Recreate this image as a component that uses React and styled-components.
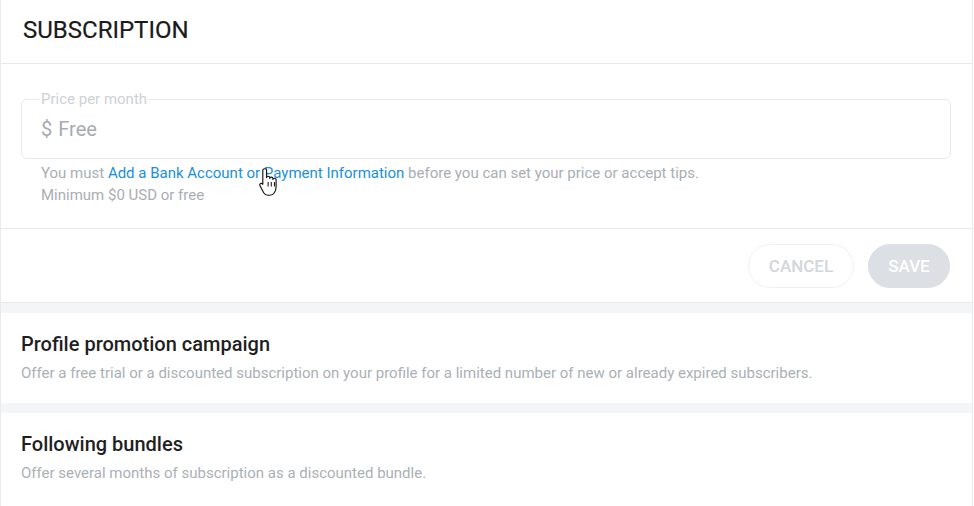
import React from 'react';
import styled, { createGlobalStyle } from 'styled-components';

const GlobalStyle = createGlobalStyle`
  html, body {
    margin: 0;
    padding: 0;
    background: #fff;
  }
  body {
    font-family: Roboto, "Liberation Sans", sans-serif;
    -webkit-font-smoothing: antialiased;
  }
`;

const Page = styled.div`
  width: 971px;
  min-height: 506px;
  border-left: 1px solid #e8eaed;
  border-right: 1px solid #e8eaed;
  background: #f4f5f7;
  display: flex;
  flex-direction: column;
  gap: 10px;
`;

const Panel = styled.section`
  background: #fff;
  border-bottom: 1px solid #e6e8eb;
`;

const Header = styled.div`
  height: 59px;
  padding: 0 22px 4px;
  display: flex;
  align-items: center;
  border-bottom: 1px solid #e6e8eb;
`;

const Title = styled.h1`
  margin: 0;
  font-size: 24px;
  font-weight: 400;
  color: #1a1a1a;
  -webkit-text-stroke: 0.2px #1a1a1a;
`;

const FormBody = styled.div`
  padding: 28px 21px 22px 20px;
  border-bottom: 1px solid #e6e8eb;
`;

const Field = styled.fieldset`
  margin: 0;
  padding: 0 19px;
  height: 67px;
  box-sizing: border-box;
  border: 1px solid #e6e8eb;
  border-radius: 6px;
  display: flex;
  align-items: center;
`;

const Legend = styled.legend`
  padding: 0 2px;
  margin-left: -2px;
  font-size: 15px;
  color: #cdd1d6;
  line-height: 15px;
`;

const Value = styled.div`
  font-size: 20px;
  color: #a7abb1;
  margin-top: -7px;
  display: flex;
  gap: 6px;
`;

const Help = styled.div`
  padding: 3px 0 0 20px;
  font-size: 15px;
  line-height: 22px;
  color: #a9aeb4;
  position: relative;
`;

const Link = styled.a`
  color: #1a8fdc;
  text-decoration: none;
  cursor: pointer;
`;

const Cursor = styled.svg`
  position: absolute;
  left: 238px;
  top: 9px;
  width: 19px;
  height: 28px;
  pointer-events: none;
`;

const Actions = styled.div`
  height: 73px;
  padding: 0 22px;
  display: flex;
  align-items: center;
  justify-content: flex-end;
  gap: 14px;
`;

const Button = styled.button`
  height: 44px;
  border-radius: 22px;
  padding: 0;
  width: ${p => (p.$primary ? '82px' : '106px')};
  font-family: Roboto, "Liberation Sans", sans-serif;
  font-size: 17px;
  font-weight: 500;
  border: 1px solid ${p => (p.$primary ? '#dcdfe3' : '#eef0f2')};
  background: ${p => (p.$primary ? '#dcdfe3' : '#fff')};
  color: ${p => (p.$primary ? '#fff' : '#d3d6db')};
  text-transform: uppercase;
  cursor: default;
`;

const Card = styled.section`
  background: #fff;
  padding: 18px 20px 20px;
  flex: ${p => (p.$grow ? 1 : 'none')};
`;

const CardTitle = styled.h2`
  margin: 0;
  font-size: 20px;
  font-weight: 500;
  line-height: 26px;
  color: #1f1f1f;
`;

const CardText = styled.p`
  margin: 6px 0 0;
  font-size: 15px;
  line-height: 20px;
  color: #aab0b6;
`;

const HandCursor = () => (
  <Cursor viewBox="0 0 15 22">
    <path
      d="M3 2C3 1.2 3.7.5 4.5.5S6 1.2 6 2v5.5c0-.6.5-1 1.2-1s1.3.4 1.3 1v.7c0-.6.5-1 1.2-1s1.3.4 1.3 1V9c0-.6.5-1 1.2-1s1.3.4 1.3 1v5.5c0 3.5-1.7 7-5 7H7c-1.5 0-2.5-.7-3.3-2L.8 14c-.4-.7-.2-1.5.5-1.8.7-.3 1.3 0 1.7.6V2z"
      fill="#fff"
      stroke="#111"
      strokeWidth="0.9"
      strokeLinejoin="round"
    />
    <path d="M7.2 11v3.6M9.7 11v3.6M12.2 11v3.6" stroke="#111" strokeWidth="0.8" />
  </Cursor>
);

export default function App() {
  return (
    <>
      <GlobalStyle />
      <Page>
        <Panel>
          <Header>
            <Title>SUBSCRIPTION</Title>
          </Header>
          <FormBody>
            <Field>
              <Legend>Price per month</Legend>
              <Value>
                <span>$</span>
                <span>Free</span>
              </Value>
            </Field>
            <Help>
              You must <Link>Add a Bank Account or Payment Information</Link> before you can set
              your price or accept tips.
              <br />
              Minimum $0 USD or free
              <HandCursor />
            </Help>
          </FormBody>
          <Actions>
            <Button>Cancel</Button>
            <Button $primary>Save</Button>
          </Actions>
        </Panel>
        <Card>
          <CardTitle>Profile promotion campaign</CardTitle>
          <CardText>
            Offer a free trial or a discounted subscription on your profile for a limited number of
            new or already expired subscribers.
          </CardText>
        </Card>
        <Card $grow>
          <CardTitle>Following bundles</CardTitle>
          <CardText>Offer several months of subscription as a discounted bundle.</CardText>
        </Card>
      </Page>
    </>
  );
}
